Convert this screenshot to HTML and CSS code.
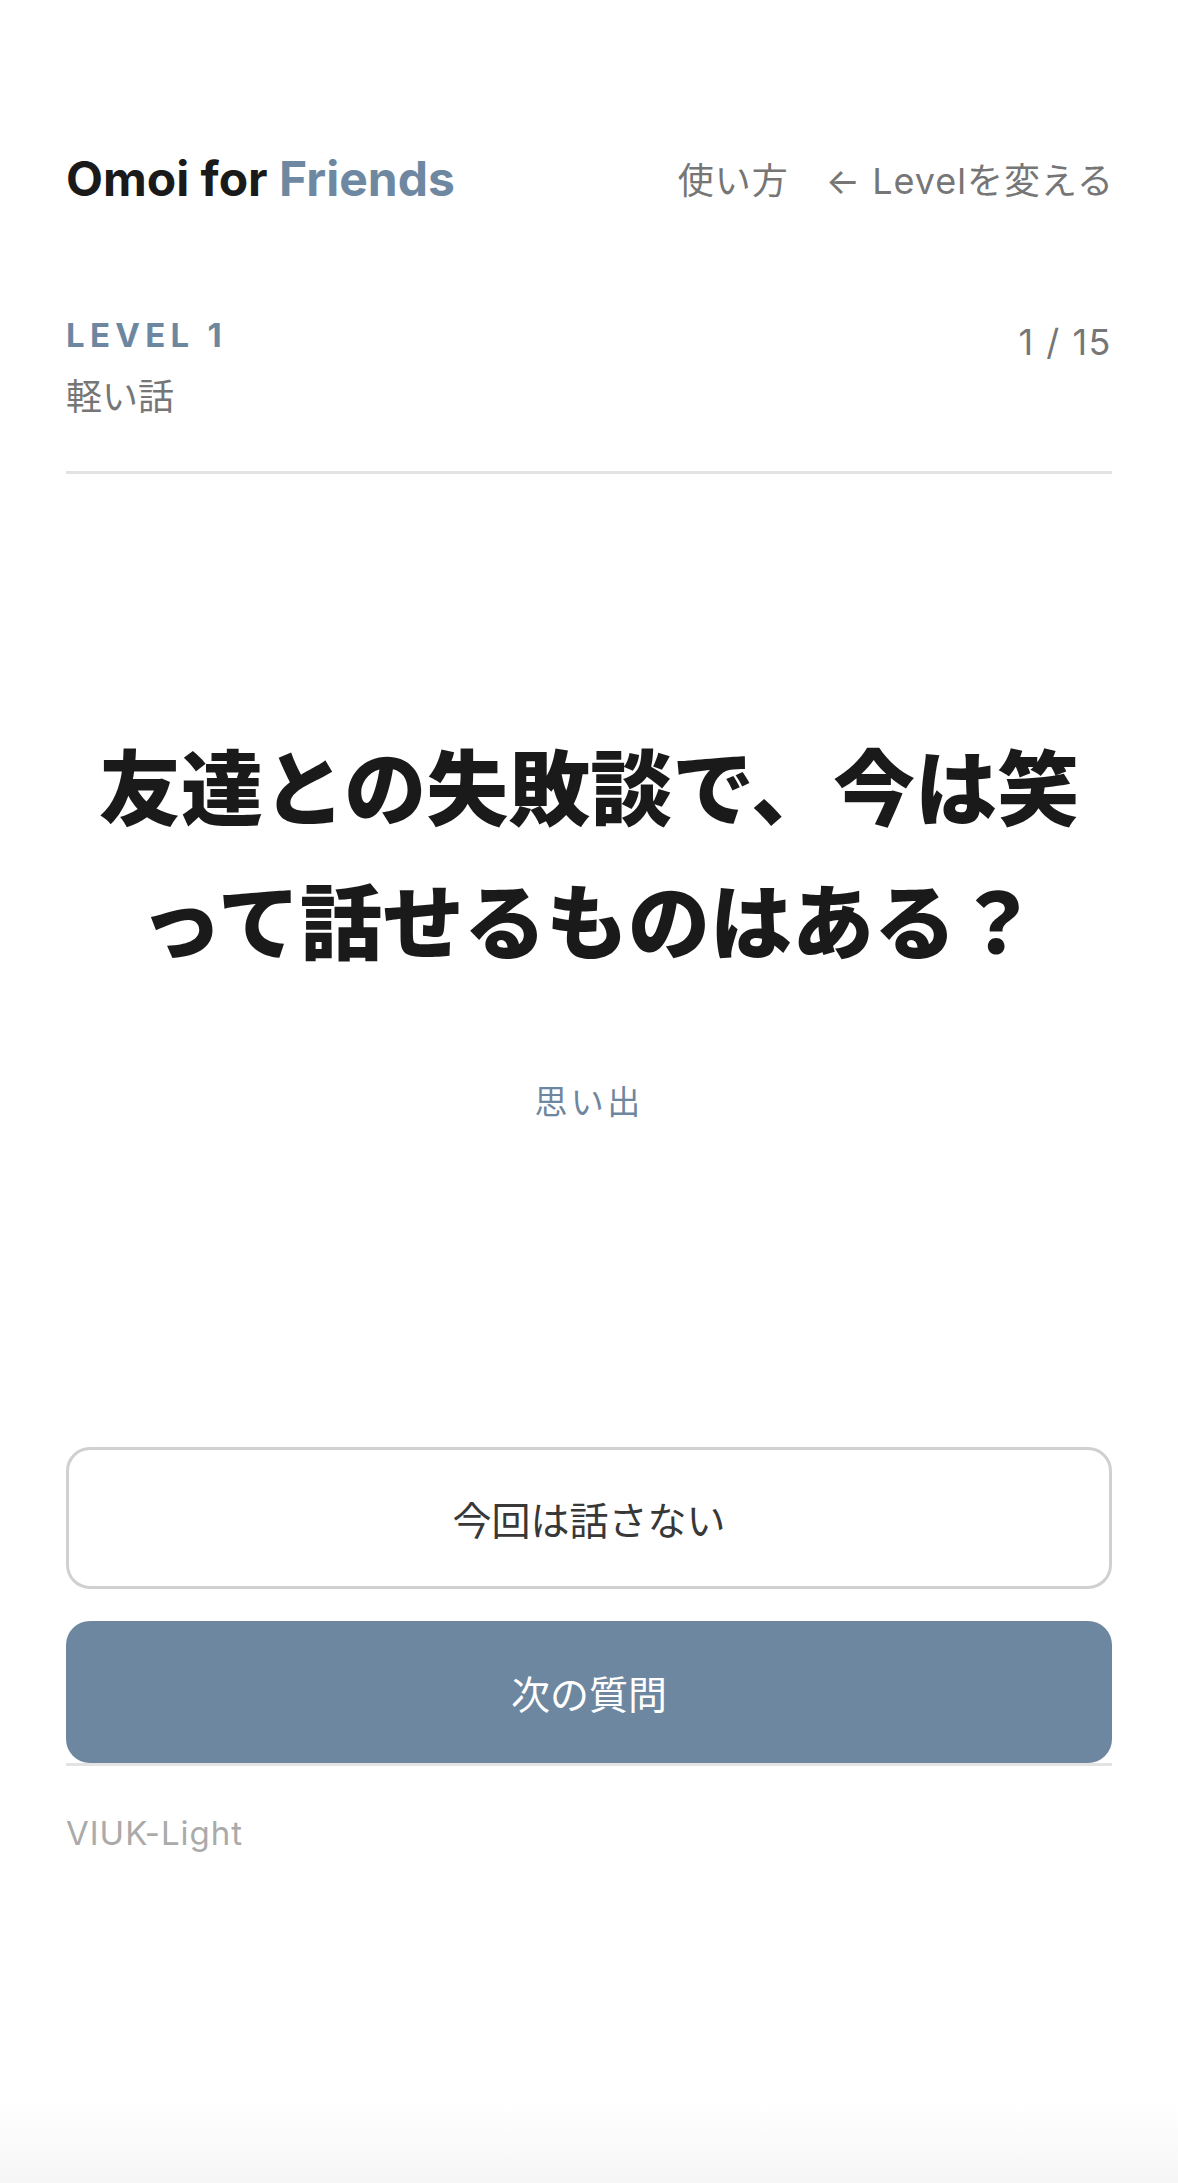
FILE: index.html
```html
<!DOCTYPE html>
<html lang="ja">
<head>
<meta charset="utf-8">
<title>Omoi for Friends</title>
<link rel="stylesheet" href="styles.css">
</head>
<body>
<div class="page">
  <header class="topbar">
    <h1 class="brand">Omoi for <span class="brand-accent">Friends</span></h1>
    <nav class="topnav">
      <a class="topnav-link" href="#">使い方</a>
      <a class="topnav-link" href="#">← Levelを変える</a>
    </nav>
  </header>

  <section class="level">
    <div class="level-info">
      <div class="level-label">LEVEL 1</div>
      <div class="level-name">軽い話</div>
    </div>
    <div class="counter">1 / 15</div>
  </section>

  <main class="card">
    <p class="question">友達との失敗談で、今は笑って話せるものはある？</p>
    <p class="tag">思い出</p>
  </main>

  <div class="actions">
    <button class="btn btn-outline" type="button">今回は話さない</button>
    <button class="btn btn-primary" type="button">次の質問</button>
  </div>

  <footer class="footer">VIUK-Light</footer>
</div>
</body>
</html>
```

FILE: styles.css
```css
html, body {
  margin: 0;
  padding: 0;
  height: 100%;
}

body {
  font-family: Inter, "Noto Sans CJK JP", sans-serif;
  color: #1a1a1a;
  background: #ffffff;
}

.page {
  box-sizing: border-box;
  min-height: 100%;
  padding: 150px 66px 0;
  background: linear-gradient(to bottom, #ffffff 0, #ffffff calc(100% - 80px), #f6f6f6 100%);
}

/* header */
.topbar {
  display: flex;
  justify-content: space-between;
  align-items: center;
}

.brand {
  margin: 0;
  font-family: Inter, sans-serif;
  font-size: 48px;
  line-height: 58px;
  font-weight: 700;
  letter-spacing: 0;
  color: #1a1a1a;
}

.brand-accent {
  color: #6f88a1;
}

.topnav {
  display: flex;
  gap: 37px;
  padding-top: 4px;
}

.topnav-link {
  font-size: 36px;
  line-height: 44px;
  letter-spacing: 1px;
  color: #767676;
  text-decoration: none;
}

.topnav-link:last-child {
  margin-right: -2px;
}

/* level row */
.level {
  display: flex;
  justify-content: space-between;
  align-items: flex-start;
  margin-top: 107px;
  padding-bottom: 53px;
  border-bottom: 3px solid #e3e3e3;
}

.level-label {
  font-family: Inter, sans-serif;
  font-size: 33px;
  line-height: 40px;
  font-weight: 700;
  letter-spacing: 0.16em;
  color: #6e87a0;
}

.level-name {
  margin-top: 15px;
  font-family: "Noto Sans CJK JP", sans-serif;
  font-size: 36px;
  line-height: 48px;
  color: #767676;
}

.counter {
  padding-top: 5px;
  font-family: Inter, sans-serif;
  font-size: 36px;
  line-height: 44px;
  letter-spacing: 1.5px;
  color: #767676;
}

/* question card */
.card {
  display: flex;
  flex-direction: column;
  align-items: center;
  padding-top: 243px;
}

.question {
  margin: 0;
  font-family: "Noto Sans CJK JP", sans-serif;
  font-size: 82px;
  line-height: 134.4px;
  font-weight: 900;
  text-align: center;
  color: #1a1a1a;
}

.tag {
  margin: 90px 0 0;
  font-family: "Noto Sans CJK JP", sans-serif;
  font-size: 33px;
  line-height: 48px;
  letter-spacing: 0.1em;
  color: #6e87a0;
}

/* actions */
.actions {
  display: flex;
  flex-direction: column;
  gap: 32px;
  margin-top: 323px;
}

.btn {
  box-sizing: border-box;
  width: 100%;
  height: 142px;
  margin: 0;
  border-radius: 24px;
  font-family: "Noto Sans CJK JP", sans-serif;
  font-size: 39px;
  line-height: 48px;
  cursor: pointer;
}

.btn-outline {
  background: #ffffff;
  border: 3px solid #d0d0d0;
  color: #383838;
}

.btn-primary {
  background: #6d87a0;
  border: 0;
  color: #ffffff;
}

/* footer */
.footer {
  border-top: 3px solid #e3e3e3;
  padding-top: 47px;
  font-family: Inter, sans-serif;
  font-size: 33px;
  line-height: 40px;
  letter-spacing: 0.03em;
  color: #aaaaaa;
}
```
